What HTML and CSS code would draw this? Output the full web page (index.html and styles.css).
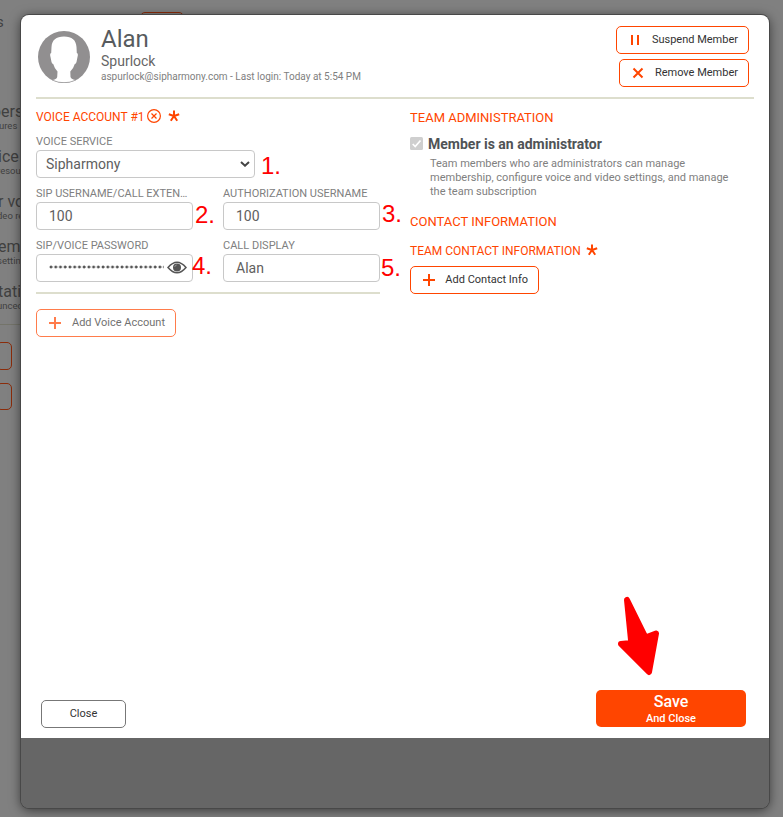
FILE: index.html
```
<!DOCTYPE html>
<html lang="en">
<head>
<meta charset="utf-8">
<title>Member settings</title>
<link rel="stylesheet" href="styles.css">
</head>
<body>
<div class="page">
  <div class="page-top"><span>s</span><i class="tab"></i></div>
  <div class="menu">
    <div class="menu-item shift"><b>bers</b><small>ures</small></div>
    <div class="menu-item"><b>ice</b><small>resou</small></div>
    <div class="menu-item"><b>r vo</b><small>deo re</small></div>
    <div class="menu-item"><b>em</b><small>settin</small></div>
    <div class="menu-item"><b>tati</b><small>unced</small></div>
  </div>
  <div class="stub"></div>
  <div class="stub"></div>
</div>

<main class="modal">
  <div class="sheet">
    <header class="head">
      <svg class="avatar" viewBox="0 0 52 52">
        <circle cx="26" cy="26" r="26" fill="#918f90"/>
        <path fill="#fff" d="M26 5.500C18 5.500 14 9 13.500 16L13.200 22Q11.500 22.500 12.500 26L13.500 31Q14 33 15.200 33Q16.500 37.500 19.500 40.500L19.200 46Q18.500 48.500 14 49Q26 54 38 49Q33.500 48.500 32.500 46L32.300 40.500Q35.500 37.500 36.800 33Q38 33 38.500 31L39.500 26Q40.500 22.500 38.800 22L38.500 16C38 9 34 5.500 26 5.500Z"/>
        <path d="M14 49Q26 54.500 38 49" fill="none" stroke="#918f90" stroke-width=".6"/>
      </svg>
      <div class="who">
        <h1>Alan</h1>
        <h2>Spurlock</h2>
        <p>aspurlock@sipharmony.com - Last login: Today at 5:54 PM</p>
      </div>
      <div class="actions">
        <button class="btn suspend"><svg viewBox="0 0 12 12"><path d="M3 1V11M9 1V11"/></svg><span>Suspend Member</span></button>
        <button class="btn remove"><svg viewBox="0 0 12 12"><path d="M1.500 1.500L10.500 10.500M10.500 1.500L1.500 10.500"/></svg><span>Remove Member</span></button>
      </div>
    </header>

    <div class="columns">
      <section class="voice">
        <h3 class="voice-title"><span>VOICE ACCOUNT #1</span>
          <svg class="clear" viewBox="0 0 14 14"><circle cx="7" cy="7" r="6.400"/><path d="M4.500 4.500L9.500 9.500M9.500 4.500L4.500 9.500"/></svg>
          <svg class="star" viewBox="0 0 12 12"><path d="M6 6V.5M6 6L.8 4.300M6 6L11.200 4.300M6 6L2.800 10.700M6 6L9.200 10.700"/></svg>
        </h3>
        <div class="field service">
          <label>VOICE SERVICE</label>
          <div class="box"><span>Sipharmony</span><svg class="chevron" viewBox="0 0 10 6"><path d="M1 1L5 4.700L9 1"/></svg></div>
          <em class="mark m1">1.</em>
        </div>
        <div class="grid">
          <div class="field"><label>SIP USERNAME/CALL EXTEN…</label><div class="box">100</div><em class="mark m2">2.</em></div>
          <div class="field"><label>AUTHORIZATION USERNAME</label><div class="box">100</div><em class="mark m3">3.</em></div>
          <div class="field"><label>SIP/VOICE PASSWORD</label>
            <div class="box password"><span class="dots"></span>
              <svg class="eye" viewBox="0 0 20 13"><path d="M1 6.500Q10-4 19 6.500Q10 17 1 6.500Z" fill="none" stroke="#555" stroke-width="1.500"/><circle cx="10" cy="6.500" r="4" fill="#555"/><path d="M7.700 6A2.300 2.300 0 0 1 9.700 4" stroke="#aaa" stroke-width=".7" fill="none"/></svg>
            </div><em class="mark m4">4.</em></div>
          <div class="field"><label>CALL DISPLAY</label><div class="box">Alan</div><em class="mark m5">5.</em></div>
        </div>
        <button class="btn add faded"><svg viewBox="0 0 12 12"><path d="M6 0V12M0 6H12"/></svg><span>Add Voice Account</span></button>
      </section>

      <section class="team">
        <h3 class="team-title"><span>TEAM ADMINISTRATION</span></h3>
        <div class="admin">
          <svg class="check" viewBox="0 0 13 13"><rect width="13" height="13" rx="1.500" fill="#cfcfcf"/><path d="M2.700 7L5.200 9.500L10.500 3.500" fill="none" stroke="#fff" stroke-width="1.700"/></svg>
          <strong>Member is an administrator</strong>
        </div>
        <p class="note">Team members who are administrators can manage<br>membership, configure voice and video settings, and manage<br>the team subscription</p>
        <h3 class="contact-title"><span>CONTACT INFORMATION</span></h3>
        <h3 class="team-contact"><span>TEAM CONTACT INFORMATION</span><svg class="star" viewBox="0 0 12 12"><path d="M6 6V.5M6 6L.8 4.300M6 6L11.200 4.300M6 6L2.800 10.700M6 6L9.200 10.700"/></svg></h3>
        <button class="btn add contact"><svg viewBox="0 0 12 12"><path d="M6 0V12M0 6H12"/></svg><span>Add Contact Info</span></button>
      </section>
    </div>

    <footer class="foot">
      <button class="close">Close</button>
      <button class="save"><b>Save</b><small>And Close</small></button>
      <svg class="arrow" viewBox="0 0 44 81"><path d="M10 4L14.300 47L4 48L32 76L39 37.500L28.500 41.500Z" fill="red" stroke="red" stroke-width="6" stroke-linejoin="round"/></svg>
    </footer>
  </div>
</main>
</body>
</html>
```

FILE: styles.css
```
* { box-sizing: border-box; }
body { margin: 0; width: 783px; height: 817px; overflow: hidden; background: #808080; font-family: Roboto, sans-serif; color: #555; position: relative; }
h1, h2, h3, p { margin: 0; font-weight: 400; }
button { font-family: inherit; margin: 0; padding: 0; cursor: pointer; }
svg { display: block; flex: none; }

.page { height: 817px; overflow: hidden; color: #404040; }
.page-top { height: 103px; display: flex; align-items: flex-start; padding-top: 12px; font-size: 15px; line-height: 20px; margin-left: -5px; }
.page-top span { width: 145px; margin-right: 1px; padding-left: 1px; }
.tab { width: 44px; height: 20px; margin-left: -1px; border: 1px solid #8b2c0a; border-radius: 5px; }
.menu { width: 60px; height: 222px; border-bottom: 1px solid #74746a; }
.menu-item { height: 45px; white-space: nowrap; }
.menu-item b { display: block; font-weight: 400; font-size: 16px; line-height: 17px; margin-left: -2px; }
.menu-item small { display: block; font-size: 9.500px; line-height: 11px; margin-left: -3px; }
.menu-item.shift b { margin-left: -8px; }
.menu-item.shift small { margin-left: -1px; }
.stub { width: 16px; height: 28px; margin: 17px 0 0 -4px; border: 1px solid #8b2c0a; border-radius: 5px; }
.stub + .stub { margin-top: 13px; height: 27px; }

.modal { position: absolute; left: 21px; top: 15px; width: 748px; height: 793px; border-radius: 8px; background: #666; overflow: hidden; }
.page::after { content: ""; position: absolute; left: 21px; top: 15px; width: 748px; height: 793px; border-radius: 8px; box-shadow: 0 0 0 1px #484848, 0 2px 12px rgba(0,0,0,.6); }
.sheet { height: 723px; background: #fff; padding: 0 15px; display: flex; flex-direction: column; }

.head { height: 84px; flex: none; display: flex; border-bottom: 2px solid #dddecd; }
.avatar { width: 52px; height: 52px; margin: 16px 11px 0 2px; }
.who { flex: 1; padding-top: 10px; }
.who h1 { font-size: 24px; line-height: 28px; color: #575b5e; }
.who h2 { font-size: 14px; line-height: 17px; color: #666; }
.who p { font-size: 10px; line-height: 13px; color: #808080; white-space: nowrap; }
.actions { display: flex; flex-direction: column; align-items: flex-end; gap: 5px; padding: 11px 5px 0 0; }

.btn { height: 28px; display: flex; align-items: center; border: 1px solid #ff4500; border-radius: 5px; background: #fff; color: #333; font-size: 11px; padding: 0 10px 0 12px; }
.btn svg { width: 12px; height: 12px; fill: none; stroke: #ff4500; stroke-width: 2; }
.btn span { margin-left: auto; white-space: nowrap; line-height: 26px; }
.suspend { width: 133px; }
.remove { width: 130px; }

.columns { flex: 1; display: flex; gap: 30px; }
.voice { width: 344px; padding-top: 11px; }
.team { flex: 1; padding-top: 11px; }
h3 { display: flex; align-items: center; color: #ff4500; height: 15px; line-height: 15px; font-size: 13px; white-space: nowrap; }
.clear { width: 14px; height: 14px; margin: -3px 0 0 2px; fill: none; stroke: #ff4500; stroke-width: 1.200; }
.star { width: 12px; height: 12px; margin: -3px 0 0 7px; fill: none; stroke: #ff4500; stroke-width: 2; }
.team-contact .star { margin-left: 5px; }
.voice-title { font-size: 12px; }
.field { position: relative; height: 52px; }
.field label { display: block; height: 15px; line-height: 14px; font-size: 11px; color: #808080; white-space: nowrap; }
.service { margin-top: 10px; width: 219px; }
.box { height: 28px; display: flex; align-items: center; border: 1px solid #c8c8c8; border-radius: 4px; padding: 0 12px 1px; font-size: 14px; line-height: 26px; color: #606060; }
.service .box { justify-content: space-between; padding: 0 4px 0 9px; }
.chevron { width: 10px; height: 6px; fill: none; stroke: #444; stroke-width: 2; }
.grid { display: grid; grid-template-columns: 157px 157px; grid-template-rows: 52px 52px; align-content: start; column-gap: 30px; border-bottom: 2px solid #dddecd; height: 107px; }
.box.password { padding: 0 5px 2px 12px; justify-content: space-between; }
.dots { width: 115px; height: 4px; margin-top: -1px; background: radial-gradient(circle at 2px 2px, #555 1.100px, transparent 1.800px) 0 0 / 4.740px 4px repeat-x; }
.eye { width: 20px; height: 13px; }
.mark { position: absolute; font: normal 24px/24px "Liberation Sans", sans-serif; color: #f00; }
.m1 { left: 225px; top: 19px; }
.m2 { left: 159px; top: 16px; }
.m3 { left: 159px; top: 15px; }
.m4 { left: 156px; top: 15px; }
.m5 { left: 158px; top: 17px; }
.add { width: 140px; margin-top: 15px; }
.faded { opacity: .7; }
.contact { width: 129px; margin-top: 7px; }

.admin { display: flex; align-items: center; height: 16px; margin-top: 11px; }
.admin strong { font-size: 14px; line-height: 16px; font-weight: 700; color: #4f5356; margin-left: 5px; }
.check { width: 13px; height: 13px; margin-top: -2px; }
.note { margin: 5px 0 0 20px; font-size: 11px; line-height: 14px; color: #808080; white-space: nowrap; }
.contact-title { margin-top: 15px; }
.team-contact { margin-top: 15px; font-size: 12px; }

.foot { position: relative; height: 48px; flex: none; display: flex; justify-content: space-between; padding: 0 8px 0 5px; }
.close { width: 85px; height: 28px; margin-top: 10px; padding-bottom: 2px; background: #fff; border: 1px solid #777; border-radius: 5px; font-size: 11px; color: #333; }
.save { width: 150px; height: 37px; border: 0; border-radius: 5px; background: #ff4500; color: #fff; display: flex; flex-direction: column; align-items: center; padding-top: 3px; }
.save b { font-size: 16px; line-height: 18px; font-weight: 500; }
.save small { font-size: 11px; line-height: 16px; font-weight: 500; }
.arrow { position: absolute; left: 581px; top: -94px; width: 44px; height: 81px; }
```
